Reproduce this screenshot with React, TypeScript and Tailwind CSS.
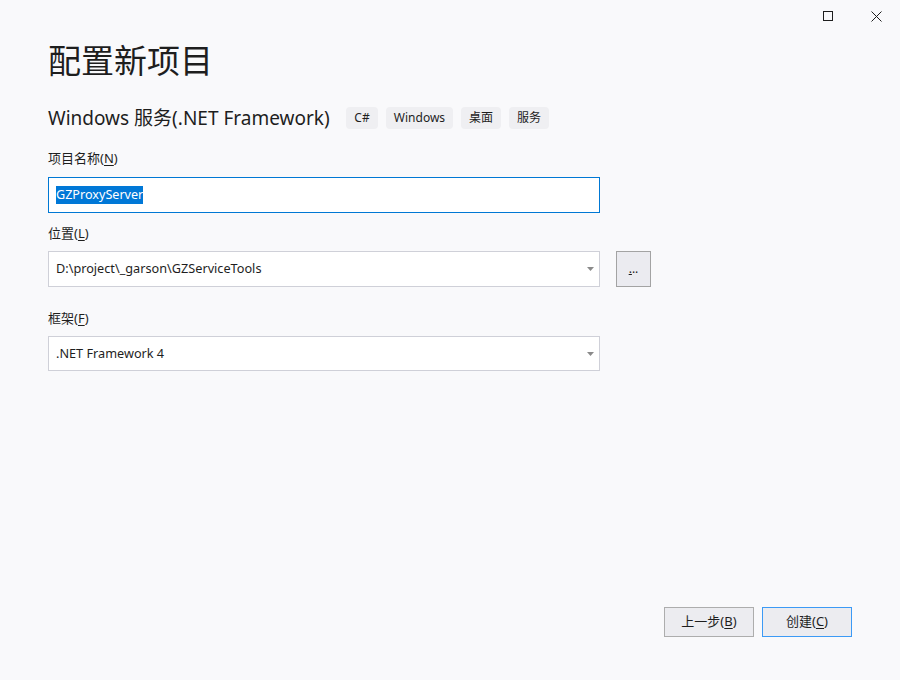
const font = {
  fontFamily: '"Segoe UI", "Noto Sans", "Noto Sans CJK SC", sans-serif',
};

const Tag = ({ label, w }: { label: string; w: string }) => (
  <span
    className={`${w} h-[22px] flex items-center justify-center rounded-[4px] bg-[#efeff2] text-[12px] text-[#1e1e1e]`}
  >
    {label}
  </span>
);

const Label = ({ text, k }: { text: string; k: string }) => (
  <div className="h-[20px] leading-[20px] text-[13px] text-[#1e1e1e]">
    {text}(<span className="underline underline-offset-2">{k}</span>)
  </div>
);

const Caret = () => (
  <svg width="7" height="4" viewBox="0 0 7 4" className="mr-[5px]">
    <path d="M0 0h7L3.5 4z" fill="#8a8a8a" />
  </svg>
);

const App = () => {
  return (
    <div style={font} className="w-[900px] h-[680px] bg-[#f9f9fb] flex flex-col overflow-hidden">
      <div className="h-[32px] flex justify-end">
        <button className="w-[48px] h-[32px] flex items-center justify-center">
          <span className="w-[10px] h-[10px] border border-[#1e1e1e]" />
        </button>
        <button className="w-[48px] h-[32px] flex items-center justify-center">
          <svg width="11" height="11" viewBox="0 0 11 11">
            <path d="M0.5 0.5l10 10M10.5 0.5l-10 10" stroke="#1e1e1e" strokeWidth="1" />
          </svg>
        </button>
      </div>

      <main className="flex flex-col pl-[48px] pr-[48px] flex-1">
        <h1 className="mt-[9px] leading-[40px] text-[33px] text-[#1e1e1e] font-normal">配置新项目</h1>

        <div className="mt-[26px] h-[22px] flex items-center">
          <span className="w-[298px] text-[19px] leading-[22px] text-[#1e1e1e]">Windows 服务(.NET Framework)</span>
          <div className="flex gap-[8px]">
            <Tag label="C#" w="w-[32px]" />
            <Tag label="Windows" w="w-[67px]" />
            <Tag label="桌面" w="w-[40px]" />
            <Tag label="服务" w="w-[40px]" />
          </div>
        </div>

        <div className="mt-[19px]">
          <Label text="项目名称" k="N" />
        </div>
        <div className="mt-[9px] w-[552px] h-[36px] border border-[#0078d4] bg-white flex items-center pl-[7px]">
          <span className="bg-[#0078d7] text-white text-[12.6px] leading-[18px]">GZProxyServer</span>
        </div>

        <div className="mt-[10px]">
          <Label text="位置" k="L" />
        </div>
        <div className="mt-[8px] flex items-center gap-[16px]">
          <div className="w-[552px] h-[36px] border border-[#cfd0d8] bg-white flex items-center justify-between pl-[7px]">
            <span className="text-[12.7px] text-[#1e1e1e]">D:\project\_garson\GZServiceTools</span>
            <Caret />
          </div>
          <button className="w-[35px] h-[36px] border border-[#a3a3a3] bg-[#ebebf0] flex items-end justify-center pb-[11px] text-[12px] leading-[12px] text-[#1e1e1e]">
            <span className="underline">.</span>..
          </button>
        </div>

        <div className="mt-[21px]">
          <Label text="框架" k="F" />
        </div>
        <div className="mt-[8px] w-[552px] h-[35px] border border-[#cfd0d8] bg-white flex items-center justify-between pl-[7px]">
          <span className="text-[12.7px] text-[#1e1e1e]">.NET Framework 4</span>
          <Caret />
        </div>

        <div className="mt-auto mb-[43px] flex justify-end gap-[8px]">
          <button className="w-[90px] h-[30px] border border-[#adadad] bg-[#ececf0] text-[13px] text-[#1e1e1e]">
            上一步(<span className="underline underline-offset-2">B</span>)
          </button>
          <button className="w-[90px] h-[30px] border border-[#3c9af5] bg-[#ececf0] text-[13px] text-[#1e1e1e]">
            创建(<span className="underline underline-offset-2">C</span>)
          </button>
        </div>
      </main>
    </div>
  );
};

export default App;
